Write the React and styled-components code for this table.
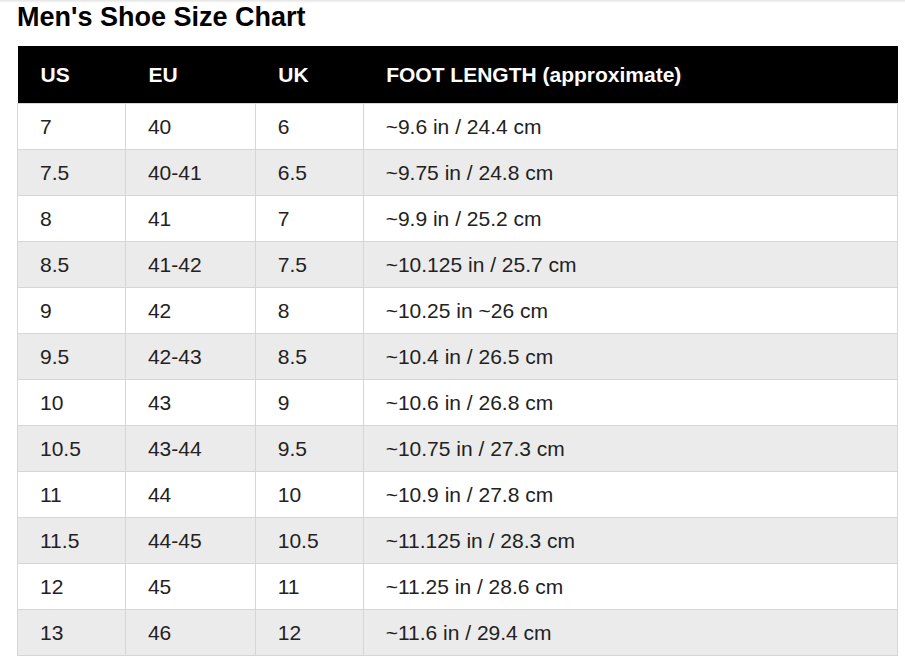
import React from 'react';
import styled, { createGlobalStyle } from 'styled-components';

const GlobalStyle = createGlobalStyle`
  html, body {
    margin: 0;
    padding: 0;
    background: #ffffff;
    font-family: 'Liberation Sans', Arial, sans-serif;
  }
`;

const TopShade = styled.div`
  height: 3px;
  background: linear-gradient(#e4e4e4, #ffffff);
`;

const Page = styled.div`
  padding: 0 7px 0 17px;
`;

const Title = styled.h2`
  margin: 0 0 15px;
  font-size: 27px;
  line-height: 28px;
  font-weight: 700;
  color: #000;
`;

const Table = styled.table`
  width: 881px;
  border-collapse: collapse;
  font-size: 21px;
  color: #222;
`;

const HeadCell = styled.th`
  background: #000;
  color: #fff;
  font-weight: 700;
  text-align: left;
  height: 57px;
  padding: 2px 0 0 23px;
  box-sizing: border-box;
  width: ${p => p.$w}px;
`;

const Row = styled.tr`
  background: ${p => (p.$odd ? '#ebebeb' : '#ffffff')};
`;

const Cell = styled.td`
  height: 46px;
  padding: 1px 0 0 22px;
  box-sizing: border-box;
  border: 1px solid #d6d6d6;
`;

const widths = [108, 130, 108, 535];
const headers = ['US', 'EU', 'UK', 'FOOT LENGTH (approximate)'];

const rows = [
  ['7', '40', '6', '~9.6 in / 24.4 cm'],
  ['7.5', '40-41', '6.5', '~9.75 in / 24.8 cm'],
  ['8', '41', '7', '~9.9 in / 25.2 cm'],
  ['8.5', '41-42', '7.5', '~10.125 in / 25.7 cm'],
  ['9', '42', '8', '~10.25 in ~26 cm'],
  ['9.5', '42-43', '8.5', '~10.4 in / 26.5 cm'],
  ['10', '43', '9', '~10.6 in / 26.8 cm'],
  ['10.5', '43-44', '9.5', '~10.75 in / 27.3 cm'],
  ['11', '44', '10', '~10.9 in / 27.8 cm'],
  ['11.5', '44-45', '10.5', '~11.125 in / 28.3 cm'],
  ['12', '45', '11', '~11.25 in / 28.6 cm'],
  ['13', '46', '12', '~11.6 in / 29.4 cm'],
];

export default function App() {
  return (
    <>
      <GlobalStyle />
      <TopShade />
      <Page>
        <Title>Men's Shoe Size Chart</Title>
        <Table>
          <thead>
            <tr>
              {headers.map((h, i) => (
                <HeadCell key={h} $w={widths[i]}>{h}</HeadCell>
              ))}
            </tr>
          </thead>
          <tbody>
            {rows.map((r, i) => (
              <Row key={r[0]} $odd={i % 2 === 1}>
                {r.map((c, j) => (
                  <Cell key={j}>{c}</Cell>
                ))}
              </Row>
            ))}
          </tbody>
        </Table>
      </Page>
    </>
  );
}
